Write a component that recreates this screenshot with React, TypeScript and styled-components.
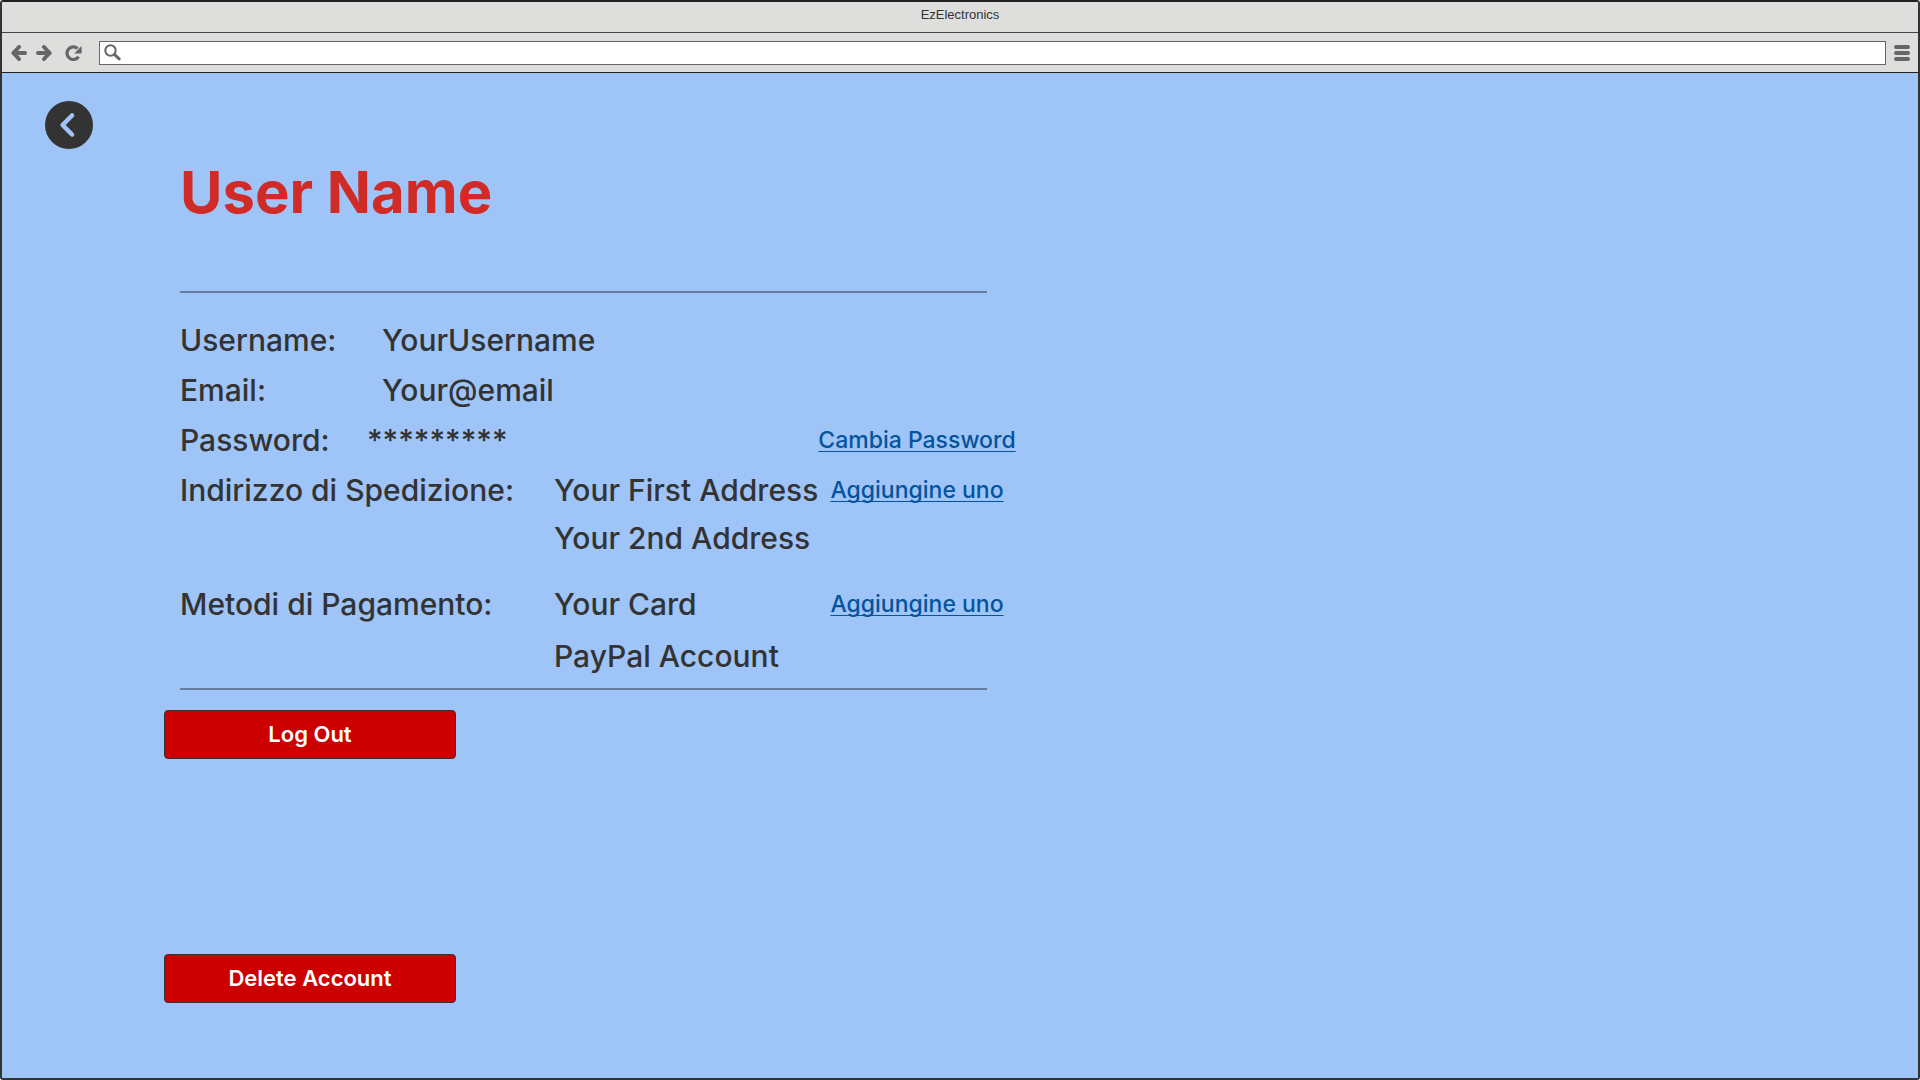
import React from "react";
import styled, { createGlobalStyle } from "styled-components";

const colors = {
  page: "#9fc4f8",
  chrome: "#dededc",
  frame: "#333333",
  edge: "#231f20",
  icon: "#666666",
  text: "#333333",
  title: "#d12b28",
  link: "#04549c",
  danger: "#cc0000",
  rule: "#667d9d",
};

const GlobalStyle = createGlobalStyle`
  *, *::before, *::after { box-sizing: border-box; }
  body {
    margin: 0;
    background: #ffffff;
    font-family: Inter, "Liberation Sans", sans-serif;
    color: ${colors.text};
  }
  button, input { font: inherit; }
`;

const BrowserWindow = styled.div`
  display: flex;
  flex-direction: column;
  min-height: 100vh;
  border: 2px solid ${colors.frame};
  border-top-color: ${colors.edge};
  border-radius: 3px;
  background: ${colors.page};
`;

const TitleBar = styled.header`
  height: 31px;
  border-bottom: 1px solid #444444;
  background: ${colors.chrome};
  font-family: "Liberation Sans", Arial, sans-serif;
  font-size: 13px;
  line-height: 25px;
  text-align: center;
`;

const Toolbar = styled.nav`
  display: flex;
  align-items: center;
  height: 40px;
  padding: 0 8px 0 9px;
  border-bottom: 1px solid ${colors.edge};
  background: ${colors.chrome};
`;

const ToolButton = styled.button<{ $gap?: number }>`
  display: flex;
  flex: none;
  margin: 0 ${(p) => p.$gap ?? 0}px 0 0;
  padding: 0;
  border: 0;
  background: none;
  color: ${colors.icon};
  cursor: pointer;
`;

const AddressBar = styled.label`
  display: flex;
  flex: 1;
  align-items: center;
  height: 24px;
  margin-right: 8px;
  padding-left: 4px;
  border: 1px solid ${colors.icon};
  background: #ffffff;
  color: ${colors.icon};
`;

const AddressInput = styled.input`
  flex: 1;
  min-width: 0;
  height: 20px;
  padding: 0 8px;
  border: 0;
  outline: 0;
  background: transparent;
  font-size: 13px;
`;

const Page = styled.main`
  flex: 1;
  padding: 28px 43px 48px;
`;

const BackButton = styled.button`
  display: flex;
  padding: 0;
  border: 0;
  border-radius: 50%;
  background: ${colors.frame};
  color: ${colors.page};
  cursor: pointer;
`;

const Account = styled.section`
  max-width: 971px;
  padding-left: 135px;
`;

const UserName = styled.h1`
  margin: 0 0 56px;
  color: ${colors.title};
  font-size: 58px;
  font-weight: 700;
  line-height: 86px;
`;

const Rule = styled.hr`
  max-width: 807px;
  height: 2px;
  margin: 0;
  border: 0;
  background: ${colors.rule};
`;

const Details = styled.dl`
  display: flex;
  flex-direction: column;
  gap: 2px;
  margin: 0;
  padding: 23px 0 8px;
  font-size: 30px;
  line-height: 48px;
  font-weight: 500;
`;

const DetailRow = styled.div<{ $spaced?: boolean }>`
  display: flex;
  align-items: flex-start;
  margin-top: ${(p) => (p.$spaced ? 16 : 0)}px;
`;

const Label = styled.dt<{ $width: number }>`
  flex: none;
  width: ${(p) => p.$width}px;
  white-space: nowrap;
`;

const Values = styled.dd<{ $gap?: number }>`
  display: flex;
  flex: 1;
  flex-direction: column;
  gap: ${(p) => p.$gap ?? 0}px;
  min-width: 0;
  margin: 0;
  white-space: nowrap;
`;

const Action = styled.dd`
  flex: none;
  width: 198px;
  margin: 0;
  font-size: 23px;
  text-align: center;
  white-space: nowrap;
`;

const ActionLink = styled.a`
  color: ${colors.link};
  text-decoration: underline;
  text-decoration-thickness: 1px;
  text-decoration-skip-ink: none;
  text-underline-offset: 3px;
`;

const Actions = styled.div`
  display: flex;
  flex-direction: column;
  align-items: flex-start;
  gap: 195px;
  padding: 20px 0 0 119px;
`;

const DangerButton = styled.button`
  width: 292px;
  height: 49px;
  padding: 0 0 2px;
  border: 1px solid ${colors.frame};
  border-radius: 4px;
  background: ${colors.danger};
  color: #ffffff;
  font-size: 22px;
  font-weight: 600;
  cursor: pointer;
`;

const Stroke = { fill: "none", stroke: "currentColor" } as const;

const ArrowIcon = ({ flip }: { flip?: boolean }) => (
  <svg width="16" height="16" viewBox="0 0 16 16" aria-hidden="true">
    <g transform={flip ? "matrix(-1 0 0 1 16 0)" : undefined} {...Stroke} strokeWidth="4" strokeLinejoin="round">
      <path d="M8 2 2.4 8 8 14" strokeLinecap="round" />
      <path d="M3 8h11" strokeLinecap="round" />
    </g>
  </svg>
);

const ReloadIcon = () => (
  <svg width="17" height="16" viewBox="0 0 17 16" aria-hidden="true">
    <path d="M12.6 3.6A6.3 6.3 0 1 0 13.6 11.6" {...Stroke} strokeWidth="3.2" />
    <path d="M16.6 1v7.4H9.2z" fill="currentColor" />
  </svg>
);

const SearchIcon = () => (
  <svg width="17" height="17" viewBox="0 0 17 17" aria-hidden="true">
    <circle cx="6.5" cy="6.5" r="5.2" {...Stroke} strokeWidth="2" />
    <path d="m10.6 10.6 4.6 4.2" {...Stroke} strokeWidth="3" strokeLinecap="round" />
  </svg>
);

const MenuIcon = () => (
  <svg width="16" height="16" viewBox="0 0 16 16" aria-hidden="true">
    <path d="M2 2h12M2 8h12M2 14h12" {...Stroke} strokeWidth="4" strokeLinecap="round" />
  </svg>
);

const ChevronIcon = () => (
  <svg width="48" height="48" viewBox="0 0 48 48" aria-hidden="true">
    <path d="M27 14.5 17.6 24l9.4 9.5" {...Stroke} strokeWidth="4.6" strokeLinecap="round" strokeLinejoin="round" />
  </svg>
);

export default function App() {
  return (
    <>
      <GlobalStyle />
      <BrowserWindow>
        <TitleBar>EzElectronics</TitleBar>
        <Toolbar aria-label="Browser">
          <ToolButton type="button" aria-label="Back" $gap={9}>
            <ArrowIcon />
          </ToolButton>
          <ToolButton type="button" aria-label="Forward" $gap={13}>
            <ArrowIcon flip />
          </ToolButton>
          <ToolButton type="button" aria-label="Reload" $gap={17}>
            <ReloadIcon />
          </ToolButton>
          <AddressBar>
            <SearchIcon />
            <AddressInput type="text" aria-label="Address" />
          </AddressBar>
          <ToolButton type="button" aria-label="Menu">
            <MenuIcon />
          </ToolButton>
        </Toolbar>

        <Page>
          <BackButton type="button" aria-label="Indietro">
            <ChevronIcon />
          </BackButton>

          <Account>
            <UserName>User Name</UserName>
            <Rule />
            <Details>
              <DetailRow>
                <Label $width={202}>Username:</Label>
                <Values>YourUsername</Values>
              </DetailRow>
              <DetailRow>
                <Label $width={202}>Email:</Label>
                <Values>Your@email</Values>
              </DetailRow>
              <DetailRow>
                <Label $width={187}>Password:</Label>
                <Values>*********</Values>
                <Action>
                  <ActionLink href="#password">Cambia Password</ActionLink>
                </Action>
              </DetailRow>
              <DetailRow>
                <Label $width={374}>Indirizzo di Spedizione:</Label>
                <Values>
                  <span>Your First Address</span>
                  <span>Your 2nd Address</span>
                </Values>
                <Action>
                  <ActionLink href="#indirizzo">Aggiungine uno</ActionLink>
                </Action>
              </DetailRow>
              <DetailRow $spaced>
                <Label $width={374}>Metodi di Pagamento:</Label>
                <Values $gap={4}>
                  <span>Your Card</span>
                  <span>PayPal Account</span>
                </Values>
                <Action>
                  <ActionLink href="#pagamento">Aggiungine uno</ActionLink>
                </Action>
              </DetailRow>
            </Details>
            <Rule />
          </Account>

          <Actions>
            <DangerButton type="button">Log Out</DangerButton>
            <DangerButton type="button">Delete Account</DangerButton>
          </Actions>
        </Page>
      </BrowserWindow>
    </>
  );
}
